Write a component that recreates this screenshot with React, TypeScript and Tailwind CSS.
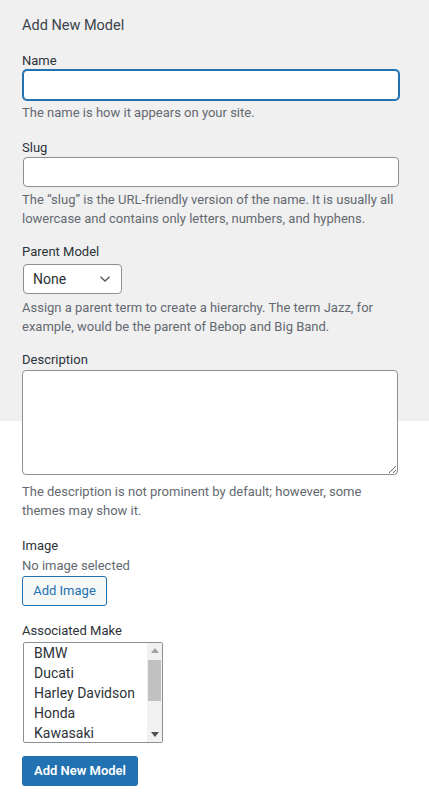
function Chevron() {
  return (
    <svg width="12" height="8" viewBox="0 0 12 8" fill="none">
      <path d="M1.5 1.8 L6 6 L10.5 1.8" stroke="#50575e" strokeWidth="1.3" />
    </svg>
  );
}

const makes = ['BMW', 'Ducati', 'Harley Davidson', 'Honda', 'Kawasaki'];

export default function App() {
  return (
    <div
      className="min-h-[801px] w-full bg-[linear-gradient(to_bottom,#f0f0f1_421px,#ffffff_421px)] px-[22px] pt-[16px] text-[13px] text-[#2c3338]"
      style={{ fontFamily: 'Roboto, "Liberation Sans", sans-serif' }}
    >
      <h2 className="text-[14.5px] leading-[20px] font-normal text-[#3c434a]">Add New Model</h2>

      {/* Name */}
      <label className="mt-[15px] block leading-[19px]">Name</label>
      <input
        type="text"
        className="ml-px block h-[30px] w-[376px] rounded-[4px] border border-[#2271b1] bg-white shadow-[0_0_0_1px_#2271b1] outline-none"
      />
      <p className="mt-[3px] leading-[19px] text-[#646970]">The name is how it appears on your site.</p>

      {/* Slug */}
      <label className="mt-[16px] block leading-[19px]">Slug</label>
      <input
        type="text"
        className="ml-px block h-[30px] w-[376px] rounded-[4px] border border-[#8c8f94] bg-white outline-none"
      />
      <p className="mt-[3px] w-[380px] leading-[19px] text-[#646970]">
        The “slug” is the URL-friendly version of the name. It is usually all lowercase and contains only letters, numbers, and hyphens.
      </p>

      {/* Parent */}
      <label className="mt-[14px] block leading-[19px]">Parent Model</label>
      <div className="mt-[3px] ml-px flex h-[30px] w-[99px] items-center justify-between rounded-[4px] border border-[#8c8f94] bg-white pl-[9px] pr-[10px] text-[14px] text-[#2c3338]">
        <span>None</span>
        <Chevron />
      </div>
      <p className="mt-[4px] w-[380px] leading-[19px] text-[#646970]">
        Assign a parent term to create a hierarchy. The term Jazz, for example, would be the parent of Bebop and Big Band.
      </p>

      {/* Description */}
      <label className="mt-[14px] block leading-[19px]">Description</label>
      <textarea
        className="mt-px block h-[105px] w-[376px] resize rounded-[4px] border border-[#8c8f94] bg-white outline-none"
      />
      <p className="mt-[7px] w-[380px] leading-[19px] text-[#646970]">
        The description is not prominent by default; however, some themes may show it.
      </p>

      {/* Image */}
      <div className="mt-[16px] leading-[20px]">Image</div>
      <div className="leading-[20px] text-[#646970]">No image selected</div>
      <button className="flex h-[30px] w-[85px] items-center justify-center rounded-[3px] border border-[#2271b1] bg-[#f6f7f7] text-[13px] text-[#2271b1]">
        Add Image
      </button>

      {/* Associated Make */}
      <label className="mt-[15px] block leading-[19px]">Associated Make</label>
      <div className="mt-[2px] ml-px flex h-[101px] w-[140px] overflow-hidden rounded-[2px] border border-[#8c8f94] bg-white">
        <div className="flex-1 pl-[10px] text-[14px] leading-[20px] text-[#2c3338]">
          {makes.map((m) => (
            <div key={m} className="whitespace-nowrap">{m}</div>
          ))}
        </div>
        <div className="flex w-[15px] flex-col bg-[#f1f1f1]">
          <div className="flex h-[15px] items-center justify-center">
            <svg width="8" height="5" viewBox="0 0 8 5"><path d="M0 5 L4 0 L8 5 Z" fill="#a3a3a3" /></svg>
          </div>
          <div className="mx-[1px] mt-[2px] h-[41px] bg-[#c1c1c1]" />
          <div className="flex-1" />
          <div className="flex h-[15px] items-center justify-center">
            <svg width="8" height="5" viewBox="0 0 8 5"><path d="M0 0 L8 0 L4 5 Z" fill="#505050" /></svg>
          </div>
        </div>
      </div>

      <button className="mt-[13px] flex h-[30px] w-[116px] items-center justify-center rounded-[3px] bg-[#2271b1] text-[13px] font-semibold text-white">
        Add New Model
      </button>
    </div>
  );
}
